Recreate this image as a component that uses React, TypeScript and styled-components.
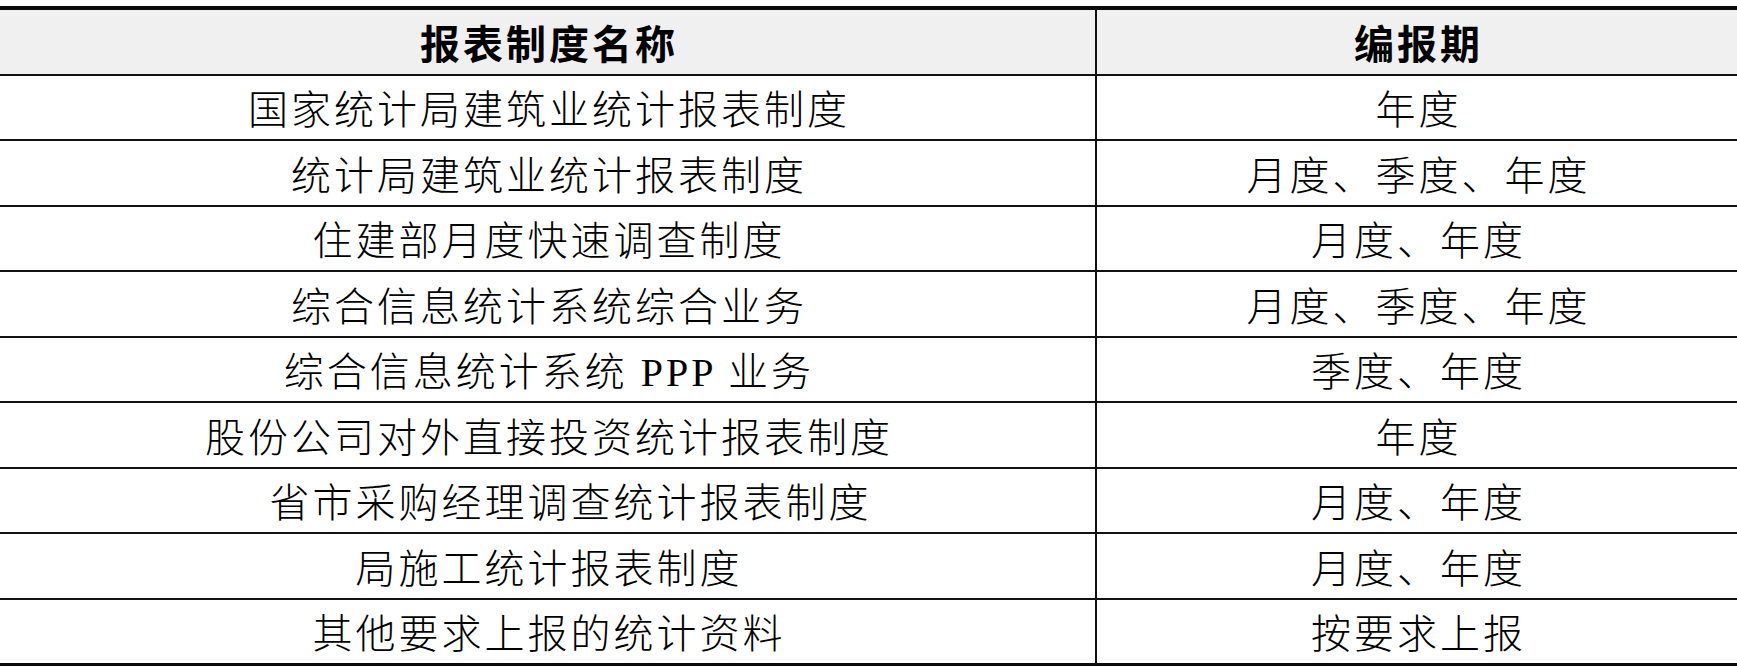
import React from 'react'
import styled, { createGlobalStyle } from 'styled-components'

const GlobalStyle = createGlobalStyle`
  html, body {
    margin: 0;
    padding: 0;
    background: #ffffff;
  }
`

const Page = styled.div`
  width: 1737px;
  padding-top: 6px;
  box-sizing: border-box;
  background: #ffffff;
`

const Table = styled.div`
  display: grid;
  grid-template-columns: 1097px 1fr;
  border-top: 4px solid #0a0a0a;
  border-bottom: 3px solid #0a0a0a;
`

const Cell = styled.div<{ $head?: boolean; $left?: boolean; $last?: boolean }>`
  height: ${p => (p.$last ? '63.5px' : '65.5px')};
  box-sizing: border-box;
  display: flex;
  align-items: center;
  justify-content: center;
  padding-left: 3px;
  border-bottom: ${p => (p.$last ? 'none' : '2px solid #111111')};
  border-right: ${p => (p.$left ? '2px solid #111111' : 'none')};
  background: ${p => (p.$head ? '#f0f0f0' : '#ffffff')};
  color: #000000;
  font-family: "Liberation Serif", "Noto Sans CJK SC", serif;
  font-size: 40px;
  font-weight: ${p => (p.$head ? 700 : 300)};
  letter-spacing: 3px;
  white-space: pre;
`

const rows: [string, string][] = [
  ['国家统计局建筑业统计报表制度', '年度'],
  ['统计局建筑业统计报表制度', '月度、季度、年度'],
  ['住建部月度快速调查制度', '月度、年度'],
  ['综合信息统计系统综合业务', '月度、季度、年度'],
  ['综合信息统计系统 PPP 业务', '季度、年度'],
  ['股份公司对外直接投资统计报表制度', '年度'],
  ['　省市采购经理调查统计报表制度', '月度、年度'],
  ['局施工统计报表制度', '月度、年度'],
  ['其他要求上报的统计资料', '按要求上报'],
]

function App() {
  return (
    <Page>
      <GlobalStyle />
      <Table>
        <Cell $head $left>报表制度名称</Cell>
        <Cell $head>编报期</Cell>
        {rows.map(([name, period], i) => {
          const last = i === rows.length - 1
          return (
            <React.Fragment key={name}>
              <Cell $left $last={last}>{name}</Cell>
              <Cell $last={last}>{period}</Cell>
            </React.Fragment>
          )
        })}
      </Table>
    </Page>
  )
}

export default App
